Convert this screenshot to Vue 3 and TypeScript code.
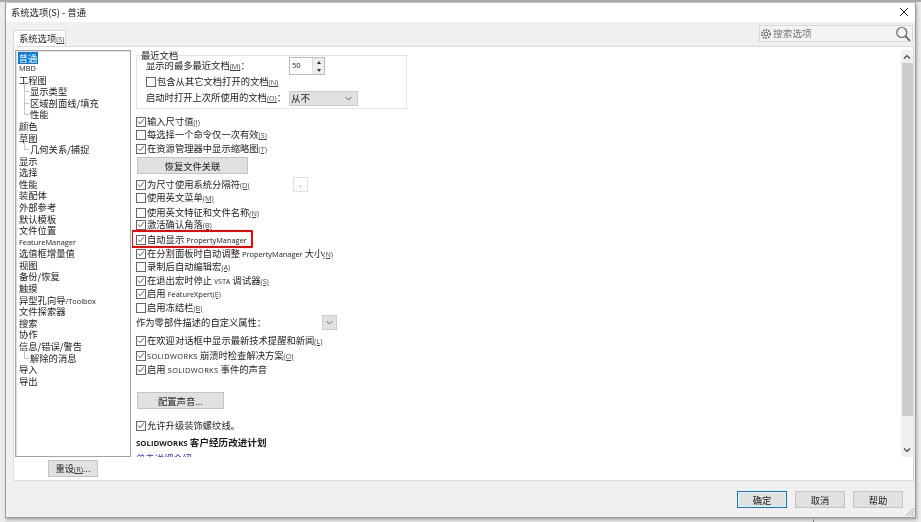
<script setup lang="ts">
interface TreeItem { label: string; tail?: string; latin?: boolean; sub?: boolean; selected?: boolean }
const tree: TreeItem[] = [
  { label: '普通', selected: true }, { label: 'MBD', latin: true }, { label: '工程图' },
  { label: '显示类型', sub: true }, { label: '区域剖面线/填充', sub: true }, { label: '性能', sub: true },
  { label: '颜色' }, { label: '草图' }, { label: '几何关系/捕捉', sub: true },
  { label: '显示' }, { label: '选择' }, { label: '性能' }, { label: '装配体' }, { label: '外部参考' },
  { label: '默认模板' }, { label: '文件位置' }, { label: 'FeatureManager', latin: true }, { label: '选值框增量值' },
  { label: '视图' }, { label: '备份/恢复' }, { label: '触摸' }, { label: '异型孔向导', tail: '/Toolbox' },
  { label: '文件探索器' }, { label: '搜索' }, { label: '协作' }, { label: '信息/错误/警告' },
  { label: '解除的消息', sub: true }, { label: '导入' }, { label: '导出' },
]
interface Opt { a: string; latin?: string; b?: string; key?: string; checked: boolean; top: number; boxed?: boolean; sep?: boolean; caps?: string }
const first: Opt[] = [
  { a: '输入尺寸值', key: '(I)', checked: true, top: 0 },
  { a: '每选择一个命令仅一次有效', key: '(S)', checked: false, top: 0.5 },
  { a: '在资源管理器中显示缩略图', key: '(T)', checked: true, top: 0.5 },
]
const second: Opt[] = [
  { a: '为尺寸使用系统分隔符', key: '(D)', checked: true, top: 0, sep: true },
  { a: '使用英文菜单', key: '(M)', checked: false, top: 0 },
  { a: '使用英文特征和文件名称', key: '(N)', checked: false, top: 2 },
  { a: '激活确认角落', key: '(B)', checked: true, top: -1 },
  { a: '自动显示 ', latin: 'PropertyManager', checked: true, top: 2, boxed: true },
  { a: '在分割面板时自动调整 ', latin: 'PropertyManager', b: ' 大小', key: '(N)', checked: true, top: 1 },
  { a: '录制后自动编辑宏', key: '(A)', checked: false, top: 0 },
  { a: '在退出宏时停止 ', latin: 'VSTA', b: ' 调试器', key: '(S)', checked: true, top: 1, caps: 'small' },
  { a: '启用 ', latin: 'FeatureXpert', key: '(E)', checked: true, top: 0 },
  { a: '启用冻结栏', key: '(B)', checked: false, top: 1 },
]
const third: Opt[] = [
  { a: '在欢迎对话框中显示最新技术提醒和新闻', key: '(L)', checked: true, top: 0 },
  { a: '', latin: 'SOLIDWORKS', b: ' 崩溃时检查解决方案', key: '(O)', checked: true, top: 2, caps: 'spaced' },
  { a: '启用 ', latin: 'SOLIDWORKS', b: ' 事件的声音', checked: true, top: 1, caps: 'spaced' },
]
</script>

<template>
  <div class="screen">
    <div class="window">
      <header class="titlebar">
        <span>系统选项(S) - 普通</span>
        <svg class="close" width="10" height="10" viewBox="0 0 10 10"><path d="M1 1l8 8M9 1l-8 8" stroke="#333" stroke-width="1" fill="none" /></svg>
      </header>

      <div class="tabline">
        <div class="tab">系统选项<span class="key">(S)</span></div>
        <div class="search">
          <svg width="12" height="12" viewBox="0 0 12 12">
            <circle cx="6" cy="6" r="1.9" fill="none" stroke="#555" />
            <circle cx="6" cy="6" r="4.2" fill="none" stroke="#555" stroke-width="1.4" stroke-dasharray="1.6 1.1" />
          </svg>
          <span class="search-text">搜索选项</span>
          <svg class="lens" width="16" height="16" viewBox="0 0 16 16">
            <circle cx="6.8" cy="6.5" r="5" fill="none" stroke="#666" stroke-width="1.2" />
            <path d="M10.5 10.2l4.5 4.6" stroke="#666" stroke-width="1.8" fill="none" />
          </svg>
        </div>
      </div>

      <div class="panel">
        <aside class="left">
          <ul class="tree">
            <li v-for="(t, i) in tree" :key="i" :class="{ sub: t.sub, latin: t.latin }">
              <span :class="{ selected: t.selected }">{{ t.label }}</span><span v-if="t.tail" class="lat">{{ t.tail }}</span>
            </li>
          </ul>
          <button class="btn reset">重设<span class="key">(R)</span>...</button>
        </aside>

        <main class="content">
          <div class="scroll">
            <fieldset class="group">
              <legend>最近文档</legend>
              <div class="line l1">
                <span class="lbl-a">显示的最多最近文档<span class="key">(M)</span>：</span>
                <span class="spin"><span class="spin-val">50</span><span class="spin-btns"><i class="up" /><i class="down" /></span></span>
              </div>
              <div class="line"><span class="cb" /><span>包含从其它文档打开的文档<span class="key">(N)</span></span></div>
              <div class="line">
                <span class="lbl-b">启动时打开上次所使用的文档<span class="key">(O)</span>：</span>
                <span class="select"><span>从不</span><svg width="7" height="5" viewBox="0 0 7 5"><path d="M.5 1l3 3 3-3" stroke="#666" fill="none" /></svg></span>
              </div>
            </fieldset>

            <div class="opts o1">
              <label v-for="o in first" :key="o.a" class="opt" :style="{ marginTop: o.top + 'px' }">
                <span class="cb"><svg v-if="o.checked" width="9" height="9" viewBox="0 0 9 9"><path d="M1.2 4.6l2.2 2.3 4.3-5" stroke="#444" stroke-width="1" fill="none" /></svg></span>
                <span>{{ o.a }}<span v-if="o.key" class="key">{{ o.key }}</span></span>
              </label>
            </div>

            <button class="btn wide">恢复文件关联</button>

            <div class="opts o2">
              <label v-for="o in second" :key="o.a" class="opt" :class="{ boxed: o.boxed, 'has-sep': o.sep }" :style="{ marginTop: o.top + 'px' }">
                <span class="cb"><svg v-if="o.checked" width="9" height="9" viewBox="0 0 9 9"><path d="M1.2 4.6l2.2 2.3 4.3-5" stroke="#444" stroke-width="1" fill="none" /></svg></span>
                <span>{{ o.a }}<span v-if="o.latin" class="lat" :class="o.caps">{{ o.latin }}</span>{{ o.b }}<span v-if="o.key" class="key">{{ o.key }}</span></span>
                <span v-if="o.sep" class="sep">.</span>
              </label>
            </div>

            <div class="describe">
              <span>作为零部件描述的自定义属性：</span>
              <span class="drop"><svg width="7" height="5" viewBox="0 0 7 5"><path d="M.5 1l3 3 3-3" stroke="#666" fill="none" /></svg></span>
            </div>

            <div class="opts o3">
              <label v-for="o in third" :key="o.b ?? o.a" class="opt" :style="{ marginTop: o.top + 'px' }">
                <span class="cb"><svg v-if="o.checked" width="9" height="9" viewBox="0 0 9 9"><path d="M1.2 4.6l2.2 2.3 4.3-5" stroke="#444" stroke-width="1" fill="none" /></svg></span>
                <span>{{ o.a }}<span v-if="o.latin" class="lat" :class="o.caps">{{ o.latin }}</span>{{ o.b }}<span v-if="o.key" class="key">{{ o.key }}</span></span>
              </label>
            </div>

            <button class="btn sound">配置声音...</button>

            <label class="opt upgrade">
              <span class="cb"><svg width="9" height="9" viewBox="0 0 9 9"><path d="M1.2 4.6l2.2 2.3 4.3-5" stroke="#444" stroke-width="1" fill="none" /></svg></span>
              <span>允许升级装饰螺纹线。</span>
            </label>
            <div class="program"><span class="lat">SOLIDWORKS</span> 客户经历改进计划</div>
            <a class="more">单击详细介绍</a>
          </div>

          <div class="scrollbar">
            <svg width="8" height="6" viewBox="0 0 8 6"><path d="M1 4.5l3-3 3 3" stroke="#444" stroke-width="1.2" fill="none" /></svg>
            <div class="thumb" />
            <svg width="8" height="6" viewBox="0 0 8 6"><path d="M1 1.5l3 3 3-3" stroke="#444" stroke-width="1.2" fill="none" /></svg>
          </div>
        </main>
      </div>

      <footer class="footer">
        <button class="btn act primary">确定</button>
        <button class="btn act">取消</button>
        <button class="btn act">帮助</button>
      </footer>
      <svg class="grip" width="10" height="10" viewBox="0 0 10 10"><path d="M9 1L1 9M9 4L4 9M9 7L7 9" stroke="#aaa" fill="none" /></svg>
    </div>
  </div>
</template>

<style>
html, body { margin: 0; background: #fff; }
</style>

<style scoped>
* { box-sizing: border-box; }
.screen {
  width: 921px; height: 522px; overflow: hidden; padding: 2px 5px 4px 5px;
  background: linear-gradient(#777, #777) 813px 518px / 1px 4px no-repeat,
    linear-gradient(#a9a9a9, #a9a9a9) 0 0 / 100% 2px no-repeat,
    linear-gradient(#555, #555) 716px 0 / 14px 2px no-repeat, #ececec;
  font: 9.3px/13px "Noto Sans CJK SC", "Noto Sans", sans-serif; color: #1a1a1a; filter: blur(0.35px);
}
.window {
  position: relative; height: 516px; background: #f0f0f0; border: 1px solid #9a9a9a; border-top-color: #c4c4c4;
  box-shadow: 1px 2px 3px #aaa; display: flex; flex-direction: column;
}
.titlebar { height: 19px; background: #fff; display: flex; align-items: center; justify-content: space-between; padding: 0 6px 0 5px; flex: none; }
.close { margin-top: -1px; }
.tabline { height: 24px; padding: 4px 2px 0 7px; display: flex; justify-content: space-between; align-items: flex-end; flex: none; }
.tab { width: 53px; height: 16px; background: #fff; border: 1px solid #d9d9d9; border-bottom: 0; padding-left: 5px; line-height: 15px; white-space: nowrap; }
.search { width: 154px; height: 17px; margin-bottom: 4px; border: 1px solid #d8d8d8; background: #f3f3f3; display: flex; align-items: center; padding: 0 1px 0 0; color: #777; }
.search > svg:first-child { margin-right: 1px; }
.search-text { font-size: 9.6px; letter-spacing: .1px; }
.lens { margin-left: auto; }
.panel { height: 435px; margin: 0 1px 0 7px; background: #fff; border: 1px solid #dcdcdc; display: flex; flex: none; }
.left { width: 118px; flex: none; padding: 3px 0 0 1px; display: flex; flex-direction: column; }
.tree { list-style: none; margin: 0; padding: .5px 0 0 3px; width: 116px; height: 407px; border: 1px solid #a4a4a4; box-shadow: inset 1px 1px 0 #ddd; }
.tree li { height: 11.58px; line-height: 11.58px; position: relative; white-space: nowrap; }
.tree li.latin { font-size: 7.4px; font-family: "Open Sans", sans-serif; }
.tree li.sub { padding-left: 11px; }
.tree li.sub::before { content: ""; box-sizing: border-box; position: absolute; left: 5px; width: 5px; top: -5px; height: 11px; border-left: 1px solid #c4c4c4; border-bottom: 1px solid #c4c4c4; }
.selected { background: #0a78d7; color: #fff; display: inline-block; padding: 0; width: 20px; margin-left: -1px; height: 12px; line-height: 12px; text-align: center; }
.reset { width: 50px; height: 17px; margin: 3px 0 0 33px; }
.btn { background: #e1e1e1; border: 1px solid #c4c4c4; color: #1a1a1a; font: inherit; padding: 0; display: block; line-height: 14px; }
.key { font-size: 7.2px; text-decoration: underline; text-decoration-thickness: .6px; color: #444; font-family: "Open Sans", sans-serif; }
.content { flex: 1; min-width: 0; display: flex; padding-top: 3px; }
.scroll { flex: 1; height: 407px; overflow: hidden; padding: 0 0 0 4px; }
.group { width: 271px; height: 54px; margin: 5px 0 0; padding: 0 0 0 9px; border: 1px solid #e3e3e3; display: block; position: relative; }
legend { position: absolute; left: 4px; top: -7px; padding: 0 1px 0 0; background: #fff; line-height: 13px; }
.line { display: flex; align-items: center; height: 16px; }
.l1 { margin-top: 2px; }
.lbl-a, .lbl-b { width: 143px; flex: none; }
.spin { width: 36px; height: 18px; display: flex; border: 1px solid #bbb; background: #fff; flex: none; }
.spin-val { flex: 1; font-size: 7.6px; padding-left: 2px; line-height: 14px; font-family: "Open Sans", sans-serif; }
.spin-btns { width: 12px; border-left: 1px solid #ddd; background: #eee; display: flex; flex-direction: column; justify-content: space-around; align-items: center; }
.spin-btns i { width: 0; height: 0; border-left: 2.5px solid transparent; border-right: 2.5px solid transparent; }
.up { border-bottom: 3px solid #333; }
.down { border-top: 3px solid #333; }
.select { width: 69px; height: 15px; background: #e1e1e1; border: 1px solid #ccc; display: flex; align-items: center; justify-content: space-between; padding: 0 5px 0 1px; font-size: 9.6px; flex: none; }
.cb { width: 10px; height: 10px; flex: none; border: 1px solid #666; background: #fff; display: inline-flex; align-items: center; justify-content: center; margin-right: 1px; }
.opt { display: flex; align-items: center; height: 13px; white-space: nowrap; }
.has-sep { width: 172px; }
.o1 { margin: 6px 0 0; }
.wide { width: 111px; height: 17px; margin: 2px 0 0 1px; }
.o2 { margin-top: 4px; }
.sep { width: 15px; height: 15px; margin-left: auto; flex: none; border: 1px solid #e0e0e0; font-size: 7px; line-height: 12px; text-align: center; }
.boxed { position: relative; }
.boxed::after { content: ""; box-sizing: border-box; position: absolute; left: -5px; top: -3px; width: 122px; height: 18px; border: 2px solid #f00; border-radius: 1px; }
.lat { font-family: "Open Sans", sans-serif; font-size: 7.4px; }
.small { font-size: 6.6px; letter-spacing: .25px; }
.spaced { font-size: 7.4px; letter-spacing: .4px; }
.describe { display: flex; align-items: center; height: 15px; margin-top: 1px; }
.describe > span:first-child { width: 186px; flex: none; }
.drop { width: 15px; height: 15px; background: #e1e1e1; border: 1px solid #ccc; display: flex; align-items: center; justify-content: center; }
.o3 { margin-top: 4px; }
.sound { width: 87px; height: 17px; margin: 16px 0 0 1px; }
.upgrade { margin-top: 10px; }
.program { margin-top: 4px; font-weight: 700; height: 13px; font-size: 9.6px; }
.program .lat { font-size: 7.8px; }
.more { display: block; color: #2a2ae8; text-decoration: underline; margin-top: 3px; height: 13px; line-height: 13px; }
.scrollbar { width: 12px; height: 407px; background: #f0f0f0; display: flex; flex-direction: column; align-items: center; padding: 4px 0; flex: none; }
.thumb { width: 11px; height: 353px; margin: 3px 0 auto; background: #cdcdcd; flex: none; }
.footer { flex: 1; display: flex; justify-content: flex-end; gap: 8px; padding: 10px 12px 0 0; }
.act { width: 50px; height: 17px; }
.primary { border-color: #0a78d7; box-shadow: inset 0 0 0 1px #e8f1fa; }
.grip { position: absolute; right: 0; bottom: 0; }
</style>
